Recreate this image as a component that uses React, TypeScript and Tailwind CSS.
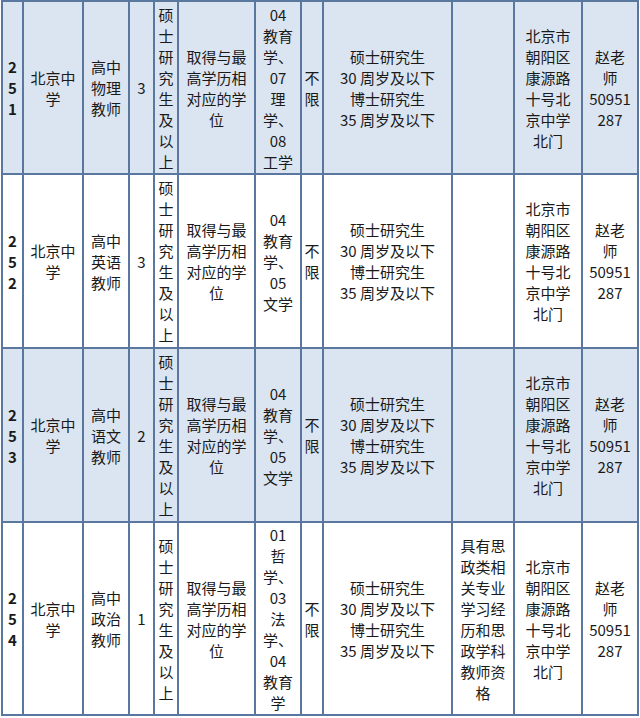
import React from "react";

type Row = {
  bg: string;
  h: string;
  no: string[];
  job: string[];
  n: string;
  major: string[];
  extra: string[];
};

const edu = ["硕", "士", "研", "究", "生", "及", "以", "上"];
const degree = ["取得与最", "高学历相", "对应的学", "位"];
const age = ["硕士研究生", "30 周岁及以下", "博士研究生", "35 周岁及以下"];
const addr = ["北京市", "朝阳区", "康源路", "十号北", "京中学", "北门"];
const contact = ["赵老", "师", "50951", "287"];

const rows: Row[] = [
  {
    bg: "bg-[#dbe5f1]",
    h: "h-[173px]",
    no: ["2", "5", "1"],
    job: ["高中", "物理", "教师"],
    n: "3",
    major: ["04", "教育", "学、", "07", "理", "学、", "08", "工学"],
    extra: [],
  },
  {
    bg: "bg-white",
    h: "h-[174px]",
    no: ["2", "5", "2"],
    job: ["高中", "英语", "教师"],
    n: "3",
    major: ["04", "教育", "学、", "05", "文学"],
    extra: [],
  },
  {
    bg: "bg-[#dbe5f1]",
    h: "h-[174px]",
    no: ["2", "5", "3"],
    job: ["高中", "语文", "教师"],
    n: "2",
    major: ["04", "教育", "学、", "05", "文学"],
    extra: [],
  },
  {
    bg: "bg-white",
    h: "h-[193px]",
    no: ["2", "5", "4"],
    job: ["高中", "政治", "教师"],
    n: "1",
    major: ["01", "哲", "学、", "03", "法", "学、", "04", "教育", "学"],
    extra: ["具有思", "政类相", "关专业", "学习经", "历和思", "政学科", "教师资", "格"],
  },
];

function Lines({ lines, bold }: { lines: string[]; bold?: boolean }) {
  return (
    <div className={bold ? "font-bold" : ""}>
      {lines.map((l, i) => (
        <div key={i} className="whitespace-nowrap">
          {l}
        </div>
      ))}
    </div>
  );
}

const td = "border-2 border-[#5a77a0] p-0 text-center align-middle";

export default function App() {
  return (
    <div
      className="w-[640px] h-[718px] bg-white overflow-hidden pl-px"
      style={{ fontFamily: '"Noto Sans CJK SC", "Noto Sans", sans-serif' }}
    >
      <table className="table-fixed border-collapse w-[636px] text-[15px] leading-[21px] text-[#1a1a1a]">
        <colgroup>
          <col className="w-[21px]" />
          <col className="w-[60px]" />
          <col className="w-[46px]" />
          <col className="w-[25px]" />
          <col className="w-[24px]" />
          <col className="w-[77px]" />
          <col className="w-[46px]" />
          <col className="w-[22px]" />
          <col className="w-[129px]" />
          <col className="w-[62px]" />
          <col className="w-[68px]" />
          <col className="w-[56px]" />
        </colgroup>
        <tbody>
          {rows.map((r, i) => (
            <tr key={i} className={`${r.bg} ${r.h}`}>
              <td className={td}>
                <Lines lines={r.no} bold />
              </td>
              <td className={td}>
                <Lines lines={["北京中", "学"]} />
              </td>
              <td className={td}>
                <Lines lines={r.job} />
              </td>
              <td className={td}>
                <Lines lines={[r.n]} />
              </td>
              <td className={td}>
                <Lines lines={edu} />
              </td>
              <td className={td}>
                <Lines lines={degree} />
              </td>
              <td className={td}>
                <Lines lines={r.major} />
              </td>
              <td className={td}>
                <Lines lines={["不", "限"]} />
              </td>
              <td className={td}>
                <Lines lines={age} />
              </td>
              <td className={td}>
                <Lines lines={r.extra} />
              </td>
              <td className={td}>
                <Lines lines={addr} />
              </td>
              <td className={td}>
                <Lines lines={contact} />
              </td>
            </tr>
          ))}
        </tbody>
      </table>
    </div>
  );
}
